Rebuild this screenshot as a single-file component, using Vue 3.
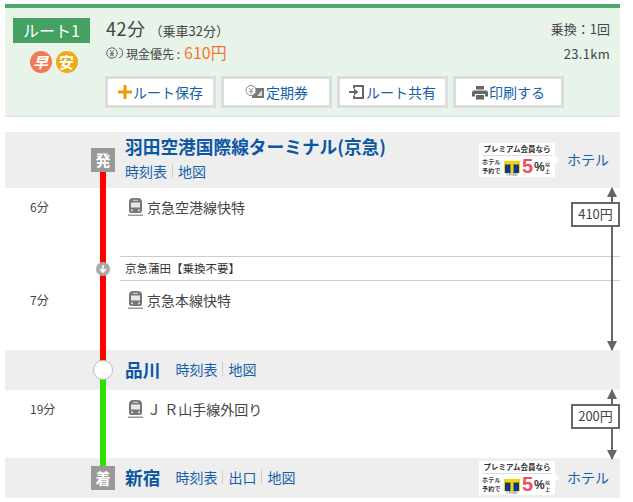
<script setup>
const rows = [
  { type: 'station', cls: 'tall', badge: '発', name: '羽田空港国際線ターミナル(京急)', links: ['時刻表', '地図'], hotel: true },
  { type: 'ride', min: '6分', line: '京急空港線快特', h: 'h68', color: 'red' },
  { type: 'via', text: '京急蒲田【乗換不要】' },
  { type: 'ride', min: '7分', line: '京急本線快特', h: 'h69', color: 'red' },
  { type: 'station', cls: 'short', circle: true, name: '品川', links: ['時刻表', '地図'] },
  { type: 'ride', min: '19分', line: 'Ｊ Ｒ山手線外回り', h: 'h68', color: 'green' },
  { type: 'station', cls: 'short', badge: '着', name: '新宿', links: ['時刻表', '出口', '地図'], hotel: true },
]
const fares = [
  { text: '410円', cls: 'fare-a' },
  { text: '200円', cls: 'fare-b' },
]
</script>

<template>
  <div class="page">
    <section class="summary">
      <div class="badge-col">
        <div class="route-tag">ルート1</div>
        <div class="marks"><span class="mark fast">早</span><span class="mark cheap">安</span></div>
      </div>
      <div class="sum-main">
        <div class="sum-top">
          <div>
            <div class="time"><b>42分</b><span>（乗車32分）</span></div>
            <div class="price">
              <svg class="yen" viewBox="0 0 18 12" width="18" height="12"><circle cx="6" cy="6" r="5.2" fill="#e8f3ea" stroke="#666" /><path d="M13 1a5.2 5.2 0 0 1 0 10" fill="none" stroke="#666" /><path d="M4 3l2 3 2-3M6 6v3.5M4 6.5h4M4 8h4" fill="none" stroke="#666" stroke-width=".9" /></svg>
              <span>現金優先 :</span><em>610円</em>
            </div>
          </div>
          <div class="sum-right"><div>乗換：1回</div><div class="km">23.1km</div></div>
        </div>
        <div class="actions">
          <button class="btn w110"><svg width="14" height="14" viewBox="0 0 14 14"><path d="M5.500 0h3v5.500H14v3H8.500V14h-3V8.500H0v-3h5.500z" fill="#f39800" /></svg>ルート保存</button>
          <button class="btn w110"><svg width="20" height="16" viewBox="0 0 20 16"><path d="M9 4h10v10H7v-3z" fill="#777" /><path d="M12 12l5-6v6z" fill="#ddd" /><circle cx="6" cy="6.500" r="5" fill="#fff" stroke="#888" /><path d="M4 4l2 2.500L8 4M6 6.500V10M4 7.500h4" fill="none" stroke="#888" stroke-width=".9" /></svg>定期券</button>
          <button class="btn w110"><svg width="16" height="16" viewBox="0 0 16 16"><path d="M4 1h11v14H4v-3.500h2V13h7V3H6v1.500H4z" fill="#666" /><path d="M0 7h5V4.500L9.500 8 5 11.500V9H0z" fill="#666" /></svg>ルート共有</button>
          <button class="btn w110"><svg width="16" height="15" viewBox="0 0 16 15"><path d="M4 1h8v3.500H4zM2 5.500h12a2 2 0 0 1 2 2v4h-3V9H3v2.500H0v-4a2 2 0 0 1 2-2zM4 10h8v4.500H4z" fill="#666" /></svg>印刷する</button>
        </div>
      </div>
    </section>

    <section class="route">
      <template v-for="(r, i) in rows" :key="i">
        <div v-if="r.type === 'station'" class="station" :class="r.cls">
          <div class="rail">
            <span v-if="r.badge" class="st-badge">{{ r.badge }}</span>
            <span v-if="r.circle" class="st-circle"></span>
          </div>
          <div class="st-body">
            <div class="st-name">{{ r.name }}</div>
            <div class="st-links">
              <template v-for="(l, j) in r.links" :key="l"><i v-if="j"></i><a>{{ l }}</a></template>
            </div>
          </div>
          <div v-if="r.hotel" class="hotel">
            <div class="promo">
              <div class="promo-top">プレミアム会員なら</div>
              <div class="promo-low">
                <span class="promo-small">ホテル<br />予約で</span>
                <span class="tp">
                  <svg width="16" height="12" viewBox="0 0 16 12"><rect width="16" height="12" fill="#fbd400" /><path d="M1 3.500h5.500V12H1zM9.500 3.500H15V12H9.500z" fill="#0b3b8c" /></svg>
                  <span class="tp-name">T-POINT</span>
                </span>
                <span class="five">5</span><span class="pct">%</span><span class="ijo">以<br />上</span>
              </div>
            </div>
            <a>ホテル</a>
          </div>
        </div>

        <div v-else-if="r.type === 'ride'" class="ride" :class="r.h">
          <div class="min">{{ r.min }}</div>
          <div class="rail"><span class="bar" :class="r.color"></span></div>
          <div class="line-name">
            <svg width="15" height="18" viewBox="0 0 15 18"><path d="M5 0h5a4 4 0 0 1 4 3.500V13a2 2 0 0 1-2 2H3a2 2 0 0 1-2-2V3.500A4 4 0 0 1 5 0z" fill="#777" /><path d="M3 4.500h9v5H3z" fill="#e8e8e8" /><path d="M5 1.800h5v1H5z" fill="#ddd" /><circle cx="4" cy="12.300" r="1.100" fill="#ddd" /><circle cx="11" cy="12.300" r="1.100" fill="#ddd" /><path d="M0 16.500h15V18H0z" fill="#999" /></svg>
            <span>{{ r.line }}</span>
          </div>
        </div>

        <div v-else class="via">
          <div class="rail">
            <span class="bar red"></span>
            <span class="via-dot"><svg width="10" height="10" viewBox="0 0 10 10"><path d="M5 1v7M2 5l3 3 3-3" fill="none" stroke="#fff" stroke-width="1.600" /></svg></span>
          </div>
          <div class="via-text">{{ r.text }}</div>
        </div>
      </template>

      <div v-for="f in fares" :key="f.text" class="fare" :class="f.cls">
        <span class="stem"></span>
        <span class="arrow up"></span>
        <span class="arrow down"></span>
        <span class="fare-box">{{ f.text }}</span>
      </div>
    </section>
  </div>
</template>

<style>
html, body { margin: 0; background: #fff; }
</style>

<style scoped>
.page { width: 615px; margin-left: 5px; padding-top: 4px; font-family: "Noto Sans CJK JP", "Noto Sans", sans-serif; color: #333; font-size: 13px; }
a { color: #1560a8; }
.summary { box-sizing: border-box; height: 113px; background: #e8f3ea; border-top: 4px solid #4fa868; border-bottom: 1px solid #ddd; display: flex; padding: 6px 10px 0 8px; }
.badge-col { width: 77px; display: flex; flex-direction: column; align-items: center; padding-top: 4px; }
.route-tag { width: 77px; height: 25px; background: #45a162; color: #fff; text-align: center; line-height: 24px; font-size: 16px; }
.marks { display: flex; gap: 4px; margin: 8px 0 0 4px; }
.mark { width: 22px; height: 22px; border-radius: 50%; color: #fff; font-weight: 700; font-size: 15px; line-height: 21px; text-align: center; font-style: italic; }
.fast { background: #ef7a55; }
.cheap { background: #efaa14; font-style: normal; }
.sum-main { flex: 1; margin-left: 16px; }
.sum-top { display: flex; justify-content: space-between; height: 62px; }
.time { height: 27px; line-height: 28px; }
.time b { font-weight: 400; font-size: 18px; color: #444; letter-spacing: .5px; }
.time span { font-size: 13px; margin-left: 4px; color: #444; }
.price { display: flex; align-items: center; height: 24px; font-size: 12px; color: #444; }
.price svg { margin-right: 2px; }
.price em { font-style: normal; font-size: 16px; line-height: 20px; color: #f07a2c; margin: -3px 0 0 4px; }
.sum-right { text-align: right; font-size: 13px; color: #444; padding-top: 3px; }
.sum-right div { height: 25px; line-height: 24px; }
.km { letter-spacing: .3px; }
.actions { display: flex; gap: 5px; margin-left: -1px; }
.btn { box-sizing: border-box; height: 32px; border: 3px solid #ddd; background: #fff; color: #1560a8; font: inherit; font-size: 14px; padding: 0; display: flex; align-items: center; justify-content: center; gap: 1px; }
.w110 { width: 111px; }
.route { position: relative; margin-top: 15px; }
.rail { position: relative; flex: none; width: 24px; margin-left: 85px; align-self: stretch; }
.station { display: flex; background: #eee; }
.station.tall { height: 56px; }
.station.short { height: 40px; }
.st-badge { position: absolute; left: 1px; bottom: 16px; width: 24px; height: 24px; background: #999; color: #fff; font-weight: 700; font-size: 15px; line-height: 23px; text-align: center; z-index: 2; }
.short .st-badge { bottom: 8px; }
.st-circle { position: absolute; left: 3px; top: 10px; width: 18px; height: 18px; background: #fff; border: 1px solid #bbb; border-radius: 50%; z-index: 2; }
.st-body { margin-left: 11px; display: flex; flex-direction: column; flex: 1; }
.short .st-body { flex-direction: row; align-items: center; padding-bottom: 2px; }
.tall .st-body { padding-top: 2px; }
.st-name { font-size: 17.700px; font-weight: 700; color: #0b57a4; line-height: 24px; }
.st-links { display: flex; align-items: center; font-size: 14px; color: #1560a8; line-height: 20px; margin-top: 3px; }
.short .st-links { margin: 0 0 0 15px; }
.st-links i { width: 1px; height: 14px; background: #ccc; margin: 0 5px; }
.hotel { display: flex; align-items: center; padding-right: 11px; font-size: 14px; }
.hotel a { position: relative; top: -1px; }
.promo { box-sizing: border-box; position: relative; width: 76px; height: 34px; background: #fff; margin-right: 12px; padding: 0 3px; color: #333; font-size: 7.500px; font-weight: 700; line-height: 11px; }
.promo::after { content: ""; position: absolute; left: 100%; top: 13px; border: 4px solid transparent; border-left-color: #fff; }
.promo-top { text-align: center; border-bottom: 1px solid #ddd; height: 12px; white-space: nowrap; }
.promo-low { display: flex; align-items: flex-start; height: 21px; font-family: "Liberation Sans", sans-serif; }
.promo-small { width: 21px; flex: none; font-family: "Noto Sans CJK JP", sans-serif; font-size: 6px; line-height: 8.700px; letter-spacing: .3px; margin-top: 2px; white-space: nowrap; }
.tp { flex: none; width: 16px; margin: 5px 2px 0 1px; display: flex; flex-direction: column; align-items: center; }
.tp svg { display: block; }
.tp-name { font-size: 3px; line-height: 4px; white-space: nowrap; font-weight: 400; }
.five { color: #ee4d5f; font-size: 20px; line-height: 20px; width: 12px; }
.pct { font-size: 12px; line-height: 22px; width: 11px; }
.ijo { font-family: "Noto Sans CJK JP", sans-serif; font-size: 5px; line-height: 7.300px; margin-top: 4px; }
.ride { display: flex; background: #fff; }
.h68 { height: 68px; }
.h69 { height: 69px; }
.bar { position: absolute; left: 10px; top: -30px; bottom: -12px; width: 6px; z-index: 1; }
.bar.red { background: #f00; }
.bar.green { background: #2de000; }
.min { position: absolute; width: 70px; padding: 10px 0 0 25px; font-size: 12px; color: #444; box-sizing: border-box; }
.line-name { display: flex; align-items: flex-start; gap: 4px; margin-left: 14px; padding-top: 10px; font-size: 14px; color: #444; line-height: 19px; }
.via { display: flex; height: 25px; position: relative; }
.via-text { flex: 1; box-sizing: border-box; margin-left: 6px; border-top: 1px solid #ccc; border-bottom: 1px solid #ccc; padding-left: 5px; font-size: 11.500px; line-height: 23px; color: #333; }
.via-dot { position: absolute; left: 6px; top: 6px; width: 14px; height: 14px; border-radius: 50%; background: #aaa; display: flex; align-items: center; justify-content: center; z-index: 2; }
.fare { position: absolute; right: 0; width: 49px; z-index: 3; }
.fare-a { top: 56px; height: 162px; }
.fare-b { top: 258px; height: 69px; }
.stem { position: absolute; right: 7px; top: 0; bottom: 0; width: 2px; background: #666; }
.arrow { position: absolute; right: 3px; border: 5px solid transparent; }
.arrow.up { top: -1px; border-top: 0; border-bottom: 10px solid #666; }
.arrow.down { bottom: -1px; border-bottom: 0; border-top: 10px solid #666; }
.fare-box { box-sizing: border-box; position: absolute; right: 0; top: 14px; width: 49px; height: 25px; background: #fff; border: 2px solid #666; text-align: center; font-size: 13px; line-height: 20px; color: #444; }
</style>
